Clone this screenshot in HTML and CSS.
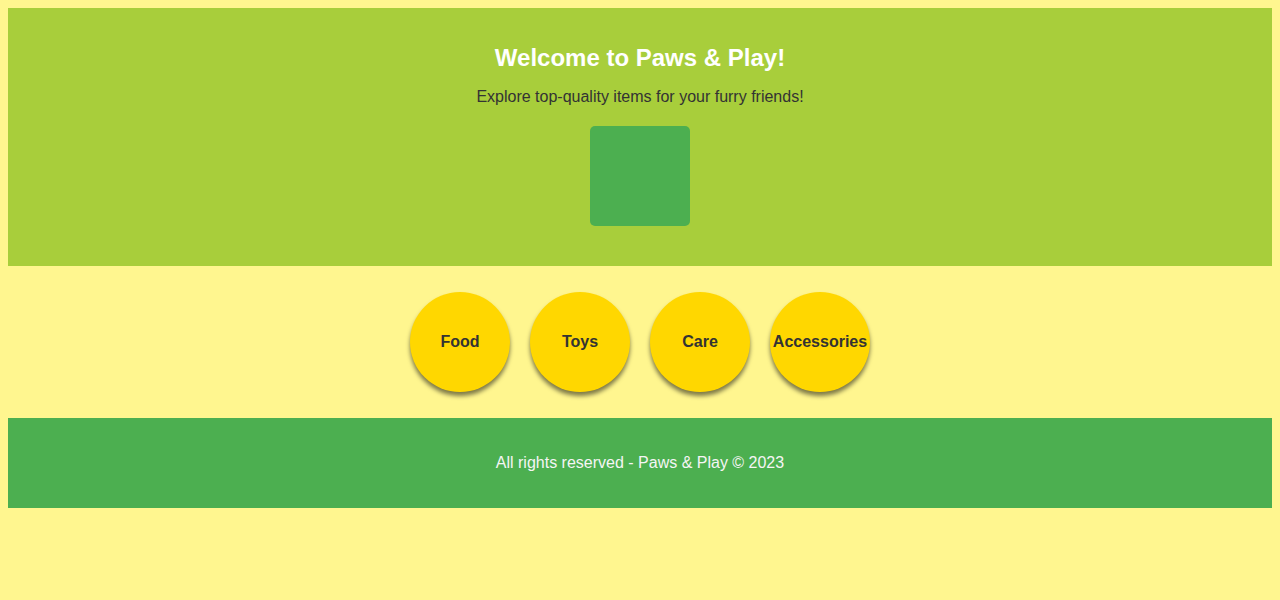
FILE: index.html
```html
<!DOCTYPE html>
<html>
<head>
<meta charset="utf-8">
<title>Paws &amp; Play</title>
<link rel="stylesheet" href="styles.css">
</head>
<body>
<header class="hero">
  <h1 class="hero-title">Welcome to Paws &amp; Play!</h1>
  <p class="hero-text">Explore top-quality items for your furry friends!</p>
  <div class="hero-box"></div>
</header>
<nav class="categories">
  <div class="cat">Food</div>
  <div class="cat">Toys</div>
  <div class="cat">Care</div>
  <div class="cat">Accessories</div>
</nav>
<footer class="footer">
  <p class="footer-text">All rights reserved - Paws &amp; Play © 2023</p>
</footer>
</body>
</html>
```
FILE: styles.css
```css
body {
  margin: 8px;
  background: #fff68f;
  font-family: "Liberation Sans", Arial, sans-serif;
}
.hero {
  background: #a8ce3b;
  padding: 20px;
  text-align: center;
}
.hero-title {
  margin: 16px 0;
  font-size: 24px;
  color: #ffffff;
}
.hero-text {
  margin: 16px 0;
  font-size: 16px;
  color: #333333;
}
.hero-box {
  width: 100px;
  height: 100px;
  margin: 20px auto;
  background: #4caf50;
  border-radius: 5px;
}
.categories {
  display: flex;
  justify-content: center;
  gap: 20px;
  padding: 26px 0;
}
.cat {
  width: 100px;
  height: 100px;
  border-radius: 50%;
  background: #ffd700;
  color: #333333;
  font-weight: bold;
  font-size: 16px;
  display: flex;
  align-items: center;
  justify-content: center;
  box-shadow: 0 4px 4px rgba(0, 0, 0, 0.5);
}
.footer {
  background: #4caf50;
  padding: 20px;
  text-align: center;
}
.footer-text {
  margin: 16px 0;
  font-size: 16px;
  color: #f5f5f5;
}
```
